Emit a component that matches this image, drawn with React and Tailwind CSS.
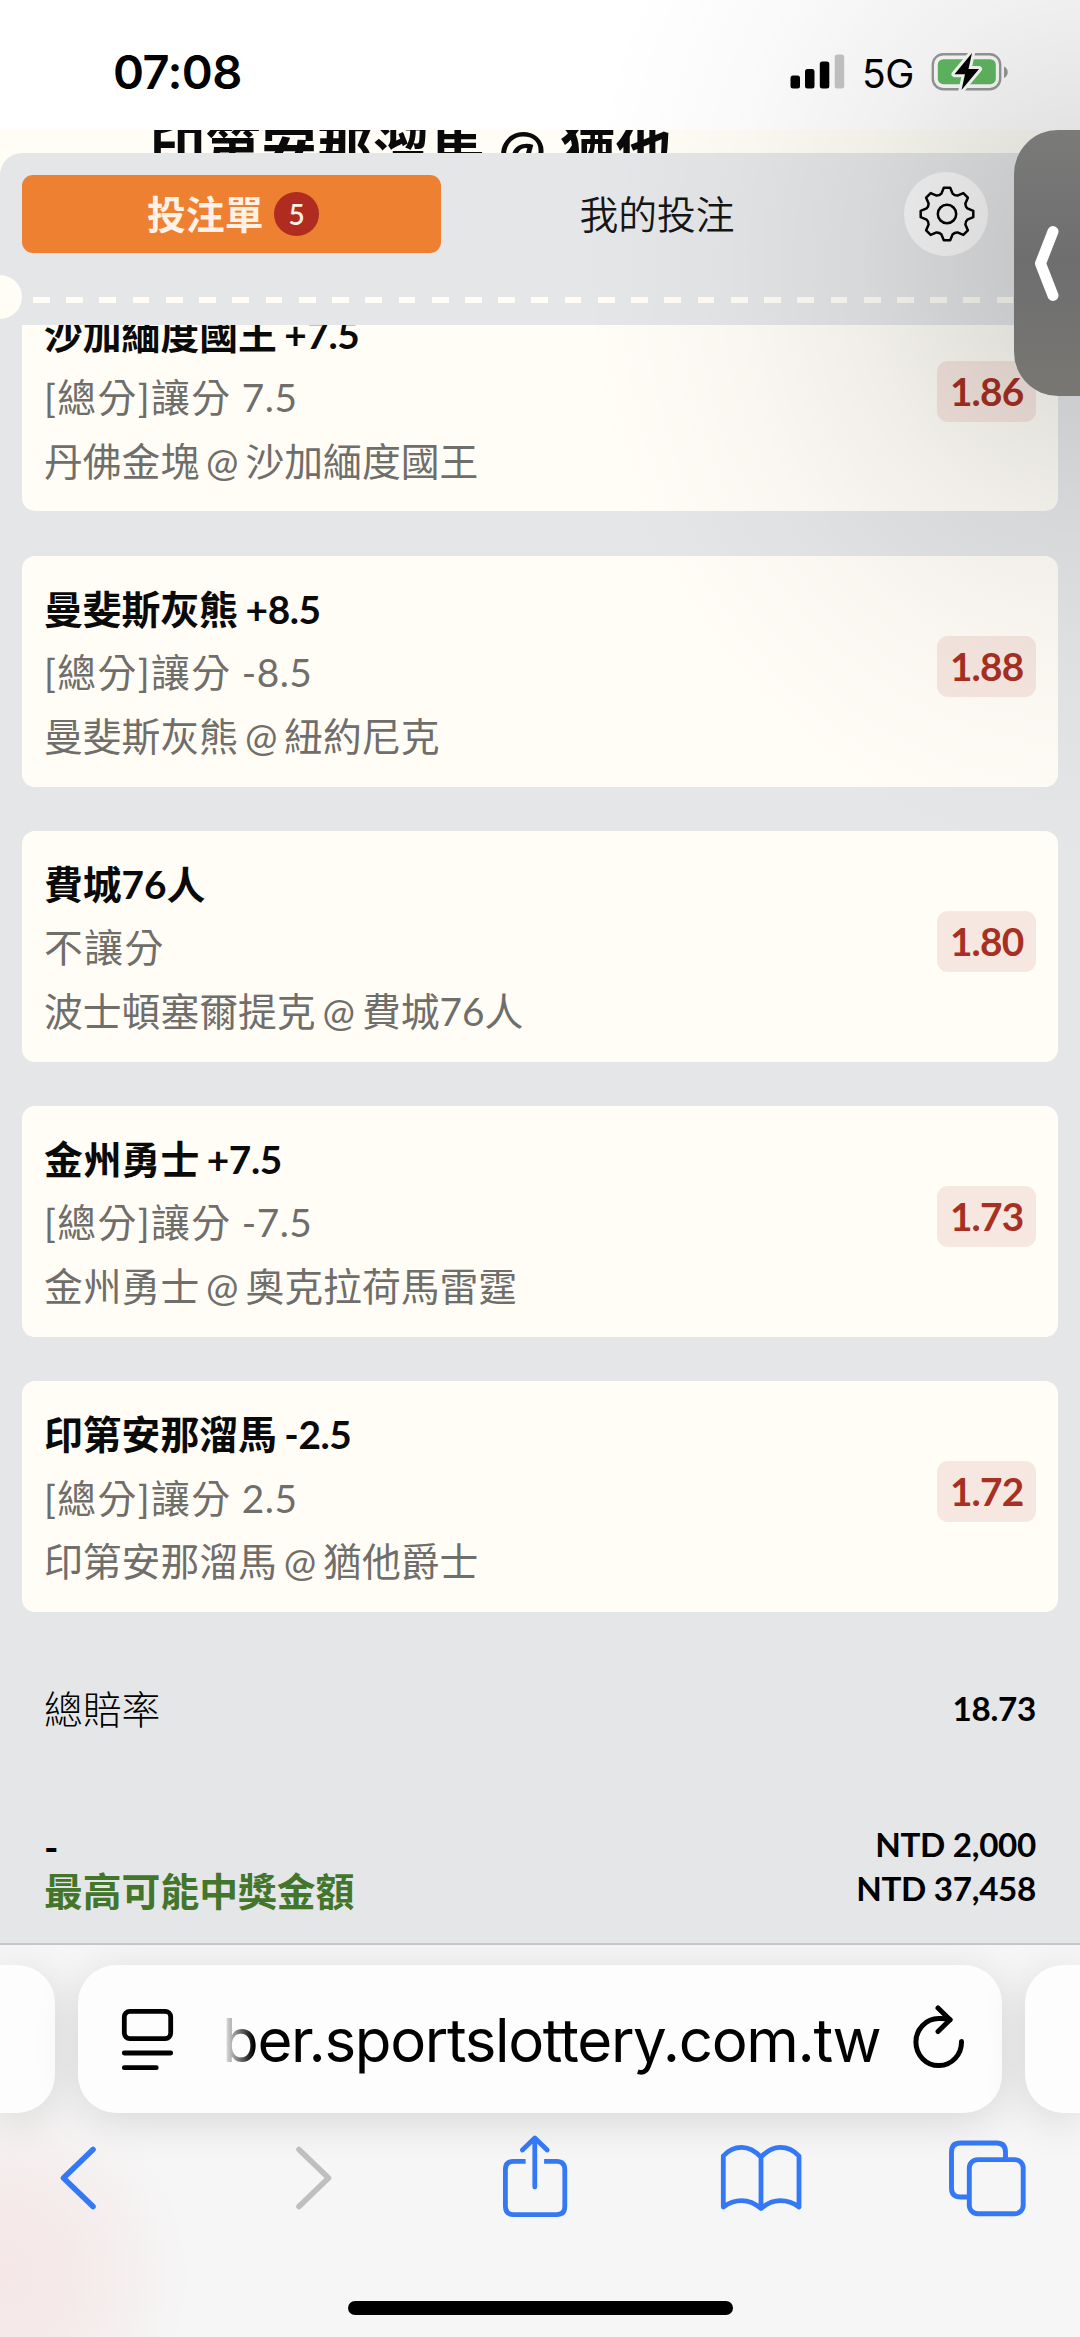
const bets = [
  {
    pick: "沙加緬度國王",
    line: "+7.5",
    market: "[總分]讓分",
    handicap: "7.5",
    match: "丹佛金塊 @ 沙加緬度國王",
    odds: "1.86",
  },
  {
    pick: "曼斐斯灰熊",
    line: "+8.5",
    market: "[總分]讓分",
    handicap: "-8.5",
    match: "曼斐斯灰熊 @ 紐約尼克",
    odds: "1.88",
  },
  {
    pick: "費城76人",
    market: "不讓分",
    match: "波士頓塞爾提克 @ 費城76人",
    odds: "1.80",
  },
  {
    pick: "金州勇士",
    line: "+7.5",
    market: "[總分]讓分",
    handicap: "-7.5",
    match: "金州勇士 @ 奧克拉荷馬雷霆",
    odds: "1.73",
  },
  {
    pick: "印第安那溜馬",
    line: "-2.5",
    market: "[總分]讓分",
    handicap: "2.5",
    match: "印第安那溜馬 @ 猶他爵士",
    odds: "1.72",
  },
];

const teeth = [0, 45, 90, 135, 180, 225, 270, 315];

// point on the gear outline, rotated with its tooth
const rot = (x, y, deg) => {
  const a = (deg * Math.PI) / 180;
  const px = x * Math.cos(a) - y * Math.sin(a);
  const py = x * Math.sin(a) + y * Math.cos(a);
  return `${px.toFixed(2)} ${py.toFixed(2)}`;
};

const gearPath =
  teeth
    .map(
      (deg, i) =>
        `${i === 0 ? "M" : "L"}${rot(-3.2, -26.3, deg)} L${rot(3.2, -26.3, deg)} L${rot(5.6, -20.4, deg)} Q${rot(7.6, -18.3, deg)} ${rot(-5.6, -20.4, deg + 45)}`
    )
    .join(" ") + " Z";

function GearIcon() {
  return (
    <svg
      className="w-[58px] h-[58px]"
      viewBox="-29 -29 58 58"
      fill="none"
      stroke="#000"
      strokeWidth="2.5"
      strokeLinejoin="round"
    >
      <path d={gearPath} />
      <circle r="9.2" />
    </svg>
  );
}

function StatusBar() {
  return (
    <div className="h-[130px] shrink-0 bg-white flex items-start justify-between pl-[113px] pr-[71px] font-['Inter',sans-serif] text-black">
      <span className="mt-[43px] text-[47px] leading-[57px] font-semibold tracking-[-0.6px]">
        07:08
      </span>
      <div className="mt-[51px] flex items-start">
        <svg className="w-[55px] h-[40px]" viewBox="0 0 55 40">
          <rect x="0.5" y="24.5" width="9.5" height="13" rx="2.5" />
          <rect x="15" y="18" width="9.5" height="19.5" rx="2.5" />
          <rect x="29.8" y="10.5" width="9.5" height="27" rx="2.5" />
          <rect x="44.7" y="3.5" width="9.5" height="34" rx="2.5" fill="#c6c6c6" />
        </svg>
        <span className="ml-[17px] w-[52px] text-[39px] leading-[46px] tracking-[-0.5px]">
          5G
        </span>
        <svg className="ml-[17px] w-[78px] h-[42px]" viewBox="0 0 78 42">
          <rect x="1.8" y="3.2" width="67.4" height="35" rx="10.5" fill="none" stroke="#9a9a9a" strokeWidth="2.4" />
          <path d="M73 15.5 C78 18 78 24.5 73 27 Z" fill="#9a9a9a" />
          <rect x="6.8" y="8.2" width="58" height="25" rx="5.5" fill="#62bb62" />
          <path
            d="M41 2 L23.5 23.2 H34 L30.5 39 L48 18 H37.5 Z"
            fill="#000"
            stroke="#fff"
            strokeWidth="6"
            strokeLinejoin="round"
            paintOrder="stroke"
          />
        </svg>
      </div>
    </div>
  );
}

function SlipHeader() {
  return (
    <div className="h-[172px] shrink-0 flex flex-col pt-[22px]">
      <div className="flex h-[78px] items-center pl-[22px]">
        <button className="flex h-[78px] w-[419px] items-center justify-center rounded-[11px] bg-[#ed8131] pl-[3px]">
          <span className="text-[38.8px] leading-[44px] font-bold text-[#fff1e6]">
            投注單
          </span>
          <span className="ml-[11px] flex size-[44.5px] items-center justify-center rounded-full bg-[#b02c21] text-[28px] font-semibold text-[#fff1e6]">
            5
          </span>
        </button>
        <button className="w-[432px] text-[38.8px] leading-[44px] font-[350] text-[#151515]">
          我的投注
        </button>
        <button className="ml-[31px] flex size-[84px] shrink-0 items-center justify-center rounded-full bg-[#fafafb] pl-[1px]">
          <GearIcon />
        </button>
      </div>
      <div className="mt-[22px] flex h-[44px] items-center">
        <div className="h-[44px] w-[22px] rounded-r-full bg-[#fffdf6]" />
        <div className="ml-[11px] mt-[6px] h-[6px] flex-1 bg-[repeating-linear-gradient(to_right,#fffdf6_0_16.8px,transparent_16.8px_33.23px)]" />
      </div>
    </div>
  );
}

function BetCard({ bet }) {
  return (
    <div className="flex h-[230.8px] shrink-0 items-start justify-between rounded-[13px] bg-[#fffdf6] px-[22px] pt-[22px]">
      <div className="text-[38.8px] leading-[63.6px] text-[#6f6e6a]">
        <div className="font-bold text-[#0a0a0a] [word-spacing:-1.5px]">
          {bet.pick}
          {bet.line && <span className="tracking-[-0.4px]"> {bet.line}</span>}
        </div>
        <div className="tracking-[1.4px]">
          {bet.market}
          {bet.handicap && (
            <span className="tracking-[0.5px]"> {bet.handicap}</span>
          )}
        </div>
        <div className="[word-spacing:-3px]">{bet.match}</div>
      </div>
      <div className="mt-[58px] h-[61px] w-[98.7px] rounded-[11px] bg-[#a52c21]/10 text-center text-[38.8px] leading-[60px] font-bold tracking-[-0.8px] text-[#a63023]">
        {bet.odds}
      </div>
    </div>
  );
}

function Totals() {
  return (
    <div className="flex flex-col px-[44px] pt-[75px] text-black">
      <div className="flex h-[44px] items-center justify-between">
        <span className="text-[38.8px] font-light">總賠率</span>
        <span className="text-[33.2px] font-bold tracking-[-0.3px]">18.73</span>
      </div>
      <div className="mt-[91px] flex items-start justify-between text-[33.2px] leading-[44.3px] font-bold tracking-[-0.3px]">
        <div className="pt-[3px] tracking-normal">
          <div className="text-[38.8px]">-</div>
          <div className="text-[38.8px] text-[#43752a]">最高可能中獎金額</div>
        </div>
        <div className="text-right">
          <div>NTD 2,000</div>
          <div>NTD 37,458</div>
        </div>
      </div>
    </div>
  );
}

function AddressBar() {
  return (
    <div className="flex h-[148px] shrink-0 justify-between">
      <div className="w-[55px] rounded-r-[38px] bg-[#fdfdfd] shadow-[0_8px_44px_rgba(0,0,0,0.13)]" />
      <div className="flex w-[924px] items-start rounded-[38px] bg-[#fdfdfd] pl-[42px] shadow-[0_8px_44px_rgba(0,0,0,0.13)]">
        <svg
          className="mt-[42px] h-[64px] w-[56px] shrink-0"
          viewBox="0 0 56 64"
          fill="none"
          stroke="#000"
          strokeWidth="4.8"
          strokeLinecap="round"
        >
          <rect x="4.3" y="4.4" width="46.4" height="27.2" rx="5.5" />
          <path d="M4.3 46 H50.7 M4.3 60.7 H36.3" />
        </svg>
        <div className="ml-[46px] mt-[37px] h-[80px] w-[670px] shrink-0 whitespace-nowrap font-['Inter',sans-serif] text-[60px] leading-[76px] tracking-[-1.35px] text-black [mask-image:linear-gradient(to_right,transparent_0,#000_32px)]">
          ber.sportslottery.com.tw
        </div>
        <svg
          className="ml-[17px] mt-[38px] h-[70px] w-[60px] shrink-0"
          viewBox="908 2003 60 70"
          fill="none"
          stroke="#000"
          strokeWidth="5"
          strokeLinecap="round"
          strokeLinejoin="round"
        >
          <path d="M960.5 2041.5 A22.8 23.5 0 1 1 937.8 2018.6 Q944 2018.4 949 2019.6" />
          <path d="M937 2008 L949 2019.8 L937 2031.5" />
        </svg>
      </div>
      <div className="w-[55px] rounded-l-[38px] bg-[#fdfdfd] shadow-[0_8px_44px_rgba(0,0,0,0.13)]" />
    </div>
  );
}

function Toolbar() {
  return (
    <div className="mt-[18px] flex h-[94px] shrink-0 items-center pl-[54px] text-[#3478f6]">
      <svg className="h-[94px] w-[50px]" viewBox="54 2131 50 94" fill="none" stroke="currentColor" strokeWidth="5.6" strokeLinecap="round" strokeLinejoin="round">
        <path d="M93 2149.5 L63.5 2178 L93 2206.5" />
      </svg>
      <svg className="ml-[184px] h-[94px] w-[50px] text-[#bfbfbf]" viewBox="288 2131 50 94" fill="none" stroke="currentColor" strokeWidth="5.6" strokeLinecap="round" strokeLinejoin="round">
        <path d="M299 2149.5 L328.5 2178 L299 2206.5" />
      </svg>
      <svg className="ml-[161px] h-[94px] w-[72px]" viewBox="499.4 2131 72 94" fill="none" stroke="currentColor" strokeWidth="4.8">
        <path d="M526 2161.3 H514 Q505.8 2161.3 505.8 2169.5 V2206.5 Q505.8 2214.6 514 2214.6 H557 Q565.2 2214.6 565.2 2206.5 V2169.5 Q565.2 2161.3 557 2161.3 H544.5" />
        <path d="M535.2 2187 V2138.5 M522.8 2150 L535.2 2138 L547.6 2150" strokeLinecap="round" strokeLinejoin="round" />
      </svg>
      <svg className="ml-[145px] h-[94px] w-[90px]" viewBox="716.3 2131 90 94" fill="none" stroke="currentColor" strokeWidth="4.8" strokeLinecap="round" strokeLinejoin="round">
        <path d="M761.3 2157 Q752 2147.3 742 2147.3 Q731 2147.3 723.6 2156 V2207 Q732 2200.6 742 2200.6 Q752 2200.6 761.3 2208.5 Q770.5 2200.6 780.5 2200.6 Q791 2200.6 799.3 2207 V2156 Q791.5 2147.3 780.5 2147.3 Q770.5 2147.3 761.3 2157 V2208" />
      </svg>
      <svg className="ml-[138px] h-[94px] w-[86px]" viewBox="944 2131 86 94" fill="none" stroke="currentColor" strokeWidth="4.9">
        <path d="M967 2197 H960.5 Q951.5 2197 951.5 2188 V2152 Q951.5 2143 960.5 2143 H996.5 Q1005.5 2143 1005.5 2152 V2159" />
        <rect x="969.3" y="2159.6" width="53.9" height="54.2" rx="8.5" />
      </svg>
    </div>
  );
}

export default function App() {
  return (
    <div className="relative flex h-[2337px] w-[1080px] flex-col overflow-hidden bg-[#fffdf6] font-['Lato','Noto_Sans_CJK_TC',sans-serif]">
      <StatusBar />

      {/* page behind the slip */}
      <div className="h-[23px] shrink-0 overflow-hidden pl-[149px]">
        <div className="-mt-[15px] whitespace-nowrap text-[56px] leading-[68px] font-bold text-[#0a0a0a]">
          印第安那溜馬 @ 猶他
        </div>
      </div>

      <div className="flex h-[1790px] shrink-0 flex-col rounded-tl-[22px] bg-[#e4e6e8]">
        <SlipHeader />
        <div className="min-h-0 flex-1 overflow-hidden">
          <div className="-mt-[44.4px] flex flex-col gap-[44.3px] px-[22px]">
            {bets.map((bet) => (
              <BetCard key={bet.pick} bet={bet} />
            ))}
          </div>
          <Totals />
        </div>
      </div>

      {/* browser chrome */}
      <div className="relative flex flex-1 flex-col overflow-hidden border-t-2 border-[#c6c6c8] bg-[#f6f6f6] bg-[radial-gradient(ellipse_190px_190px_at_0_330px,#f5e7e7_0,#f5eaea_40%,transparent_100%)] pt-[20px]">
        <AddressBar />
        <Toolbar />
        <div className="mx-auto mt-[76px] h-[14px] w-[385px] shrink-0 rounded-full bg-black" />
      </div>

      {/* shade cast by the side handle */}
      <div className="pointer-events-none absolute inset-0 bg-[radial-gradient(ellipse_500px_600px_at_1080px_263px,rgba(0,0,0,0.15)_0,rgba(0,0,0,0.125)_15%,rgba(0,0,0,0.06)_45%,rgba(0,0,0,0.025)_70%,transparent_100%)]" />
      <div className="absolute right-0 top-[130px] flex h-[266px] w-[66px] items-center rounded-l-[44px] bg-linear-to-b from-[#7a7a79] via-[#6e6e6f] to-[#787773]">
        <svg className="ml-[16px] h-[84px] w-[36px]" viewBox="1030 221 36 84" fill="none" stroke="#fff" strokeWidth="11" strokeLinecap="round" strokeLinejoin="round">
          <path d="M1053 231.5 L1040.5 263.5 L1053 295.5" />
        </svg>
      </div>
    </div>
  );
}
